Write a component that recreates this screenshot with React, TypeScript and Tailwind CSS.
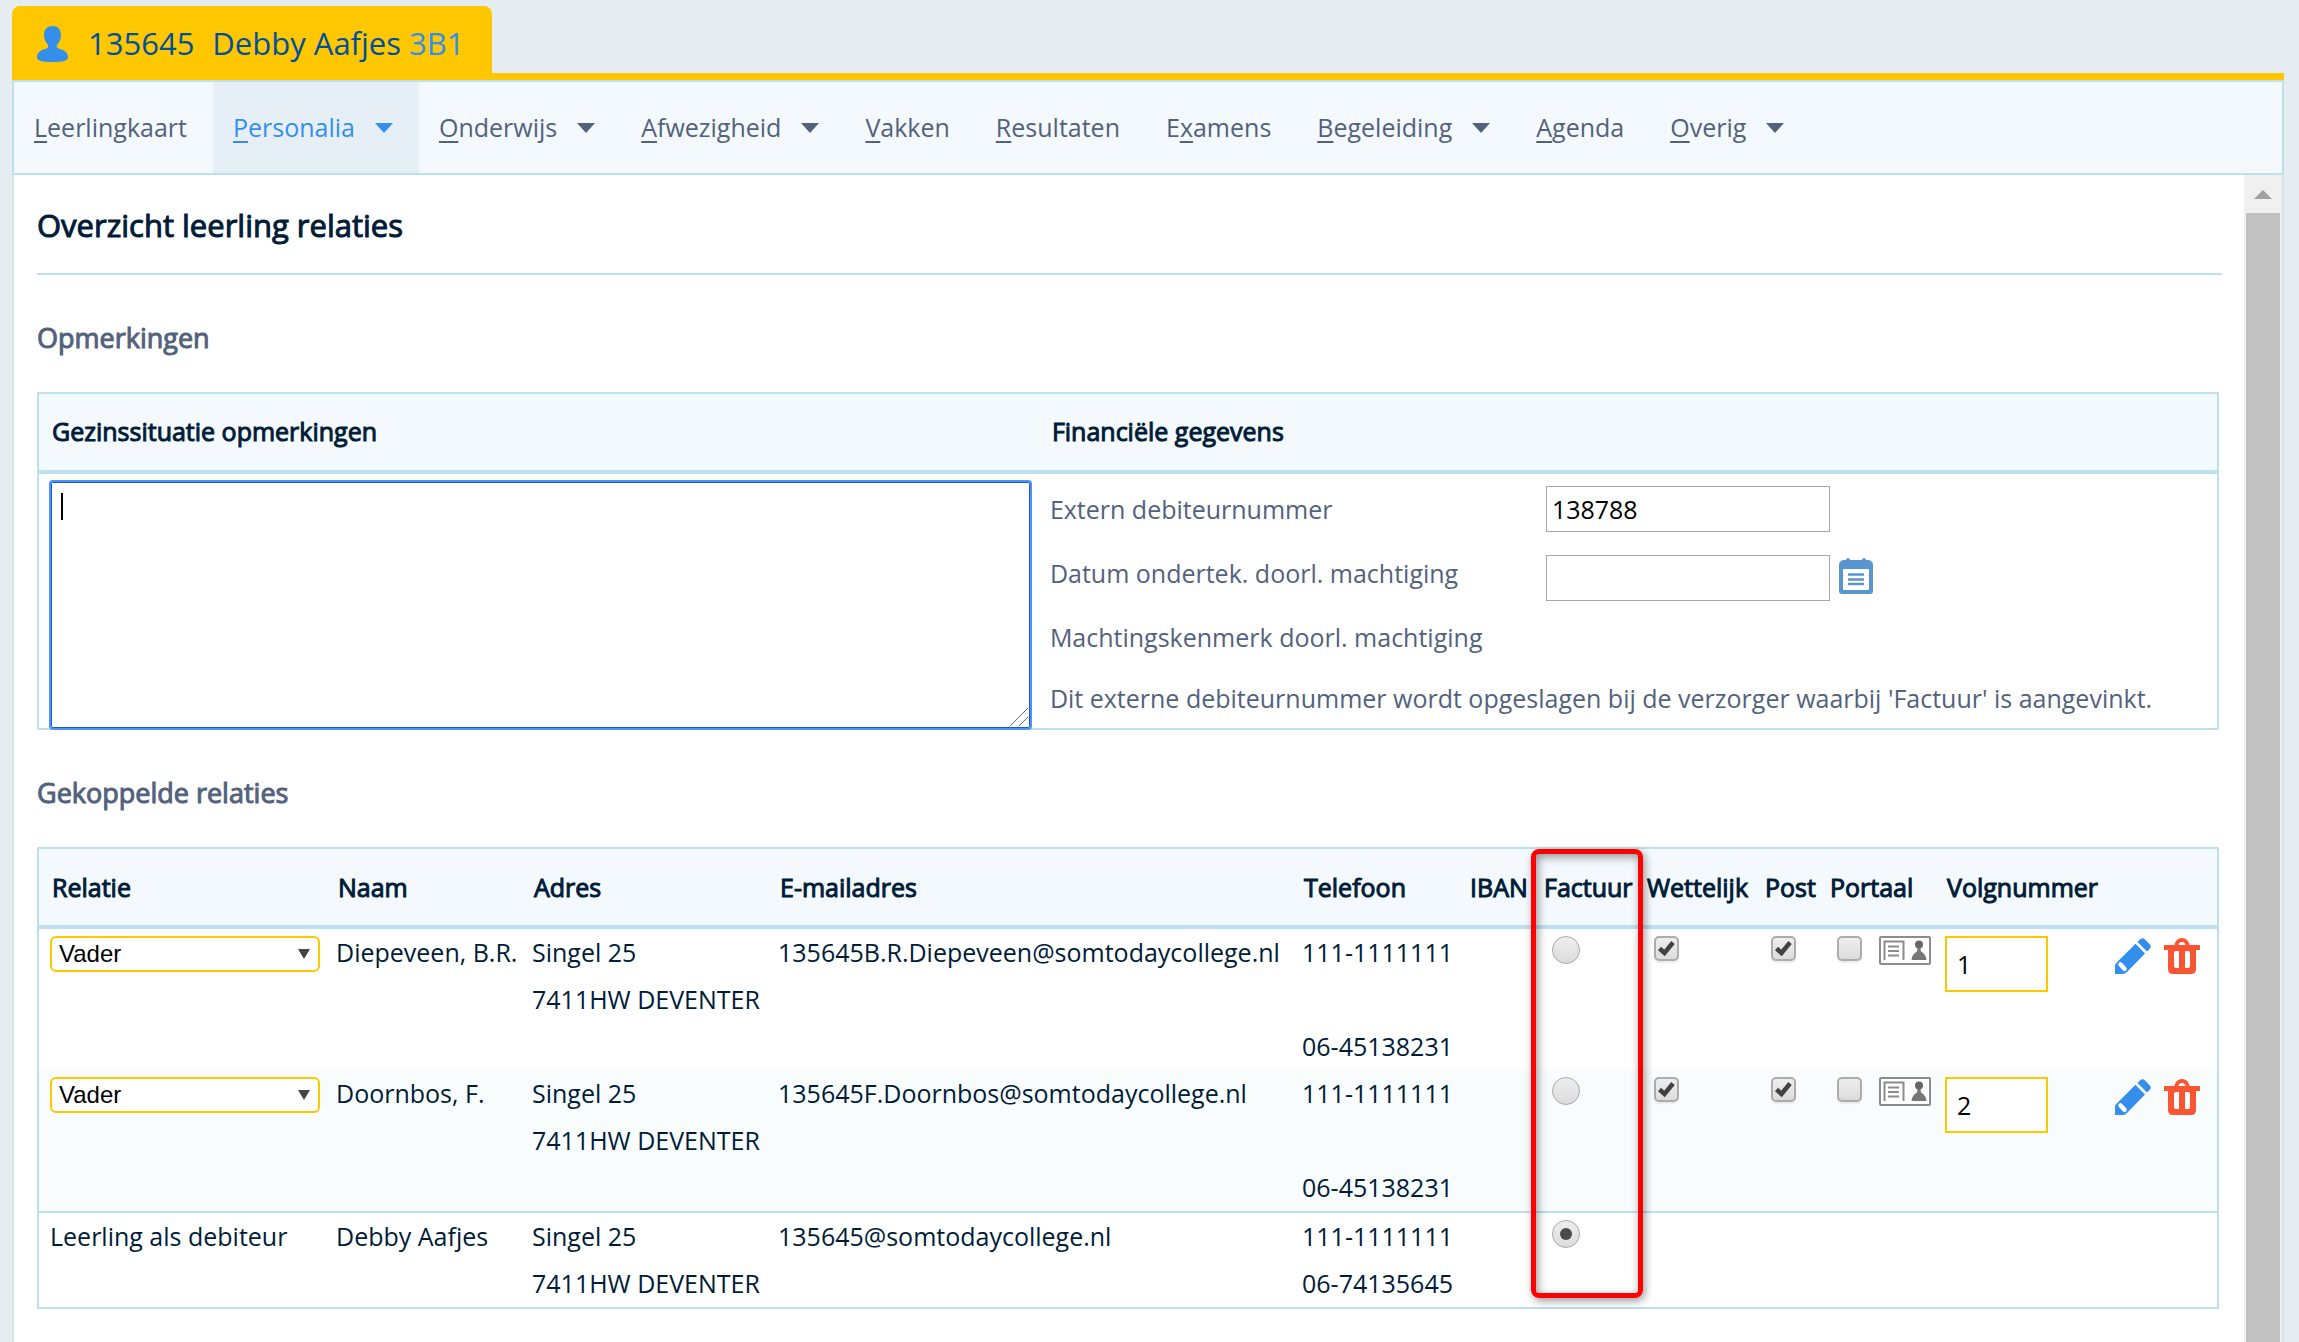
import React from "react";

const navItems = [
  { before: "", key: "L", after: "eerlingkaart" },
  { before: "", key: "P", after: "ersonalia", menu: true, active: true },
  { before: "", key: "O", after: "nderwijs", menu: true },
  { before: "", key: "A", after: "fwezigheid", menu: true },
  { before: "", key: "V", after: "akken" },
  { before: "", key: "R", after: "esultaten" },
  { before: "E", key: "x", after: "amens" },
  { before: "", key: "B", after: "egeleiding", menu: true },
  { before: "", key: "A", after: "genda" },
  { before: "", key: "O", after: "verig", menu: true },
];

const relations = [
  {
    id: "1",
    name: "Diepeveen, B.R.",
    email: "135645B.R.Diepeveen@somtodaycollege.nl",
    row: "bg-white",
  },
  {
    id: "2",
    name: "Doornbos, F.",
    email: "135645F.Doornbos@somtodaycollege.nl",
    row: "bg-[#f8fcfd]",
  },
];

function PersonIcon() {
  return (
    <svg viewBox="0 0 31 36" className="h-9 w-[31px] shrink-0" fill="#348fec" aria-hidden="true">
      <path d="M15.500 0C20.500 0 24 3 24 9C24 13.500 22 16.500 20 19C19.300 21.500 20 22 23 23C28 24.500 31 27 31 31C31 35 26 36 15.500 36C5 36 0 35 0 31C0 27 3 24.500 8 23C11 22 11.700 21.500 11 19C9 16.500 7 13.500 7 9C7 3 10.500 0 15.500 0Z" />
    </svg>
  );
}

function CalendarIcon() {
  return (
    <svg viewBox="0 0 34 36" className="h-9 w-[34px]" aria-hidden="true">
      <path
        fill="#5896d2"
        fillRule="evenodd"
        d="M7 2Q7 0 9 0T11 2H23Q23 0 25 0T27 2H30Q34 3 34 7V33Q34 36 31 36H3Q0 36 0 33V7Q0 3 4 2ZM5 11Q4 11 4 12V31Q4 32 5 32H29Q30 32 30 31V12Q30 11 29 11Z"
      />
      <path stroke="#5896d2" strokeWidth="2.400" d="M9 16.500H25M9 21.500H25M9 26H25" />
    </svg>
  );
}

function PencilIcon() {
  return (
    <svg viewBox="0 0 36 36" className="size-9" fill="#348fec" aria-hidden="true">
      <path d="M22.500 4L25 1.500Q27.500 -0.800 30 1.500L34.500 6Q37 8.500 34.500 11L32 13.500Z" />
      <path d="M20.500 5.800L30 15.500L12 34Q10 36 8 36H0V28Q0 26 2 24.300Z" />
      <path d="M5.500 26.500L9.500 30.800" stroke="#fff" strokeWidth="4.500" strokeLinecap="round" />
    </svg>
  );
}

function TrashIcon() {
  return (
    <svg viewBox="0 0 36 36" className="size-9" fill="#fa5532" aria-hidden="true">
      <path
        fillRule="evenodd"
        d="M0 7H10.500C11 3 14 0 18 0S25 3 25.500 7H36V12H32V31Q32 36 27 36H9Q4 36 4 31V12H0ZM14.500 7H21.500Q21 4 18 4T14.500 7ZM12 13Q10 13 10 15V28Q10 30 12 30H15V13ZM21 13V30H24Q26 30 26 28V15Q26 13 24 13Z"
      />
    </svg>
  );
}

function CardIcon() {
  return (
    <svg viewBox="0 0 52 29" className="h-[29px] w-[52px]" aria-hidden="true">
      <rect x="1" y="1" width="50" height="27" rx="1" fill="#fff" stroke="#8c8c8c" strokeWidth="2" />
      <path d="M5.500 24V5.500H24.500V24" fill="none" stroke="#8c8c8c" strokeWidth="2" />
      <path d="M9 10.500H20M9 15H20M9 19.500H20" stroke="#8c8c8c" strokeWidth="2" />
      <circle cx="40" cy="8.500" r="4" fill="#666" />
      <path d="M38.500 12H41.500L42 15.500Q47 18 47.500 24H32.500Q33 18 38 15.500Z" fill="#777" />
    </svg>
  );
}

function Tick({ label, checked = false }: { label: string; checked?: boolean }) {
  return (
    <span className="grid size-[25px]">
      <input
        type="checkbox"
        aria-label={label}
        defaultChecked={checked}
        className="peer col-start-1 row-start-1 size-[25px] appearance-none rounded-[5px] border-2 border-[#acacac] bg-linear-to-b from-[#eeeeee] to-[#dcdcdc] shadow-[0_2px_1px_#ebebeb]"
      />
      <svg
        viewBox="0 0 25 25"
        className="pointer-events-none invisible col-start-1 row-start-1 size-[25px] peer-checked:visible"
        aria-hidden="true"
      >
        <path d="M5.500 12.500L10.500 17L19 6.500" fill="none" stroke="#424242" strokeWidth="4.500" />
      </svg>
    </span>
  );
}

function InvoiceRadio({ label, checked = false }: { label: string; checked?: boolean }) {
  return (
    <span className="ml-[10px] grid size-7 place-items-center">
      <input
        type="radio"
        name="factuur"
        aria-label={label}
        defaultChecked={checked}
        className="peer col-start-1 row-start-1 size-7 appearance-none rounded-full border border-[#a8a8a8] bg-linear-to-b from-[#eeeeee] to-[#dcdcdc]"
      />
      <span className="pointer-events-none invisible col-start-1 row-start-1 size-3 rounded-full bg-[#4a4a4a] peer-checked:visible" />
    </span>
  );
}

function Address() {
  return (
    <>
      Singel 25
      <br />
      7411HW DEVENTER
    </>
  );
}

const headCell =
  "h-20 border-b-4 border-[#bde0ed] bg-[#f4f9fd] text-left align-middle font-normal [-webkit-text-stroke:1px]";
const th = headCell + " pl-[13px]";
const td = "pl-[11px]";
const control = "pt-[7px] pl-[11px]";
const sectionTitle =
  "pt-[9px] text-[27px] leading-[108px] font-normal text-[#53627c] [-webkit-text-stroke:1px]";
const textBox = "h-[46px] w-[284px] border border-[#a6a6a6] bg-white px-[5px] text-black";

export default function App() {
  return (
    <div className="flex min-h-screen flex-col bg-[#e5edf0] pt-[6px] pr-[15px] pl-3 font-['Open_Sans',sans-serif] text-[25px] text-[#001c37]">
      <header className="border-b-[7px] border-[#ffc700]">
        <div className="flex h-[67px] w-fit items-center rounded-t-lg bg-[#ffc700] pt-2 pr-[27px] pl-[25px] text-[31px] text-[#004f9e]">
          <PersonIcon />
          <span className="ml-5">135645</span>
          <span className="ml-[18px]">Debby Aafjes</span>
          <span className="ml-2 text-[#348fec]">3B1</span>
        </div>
      </header>

      <nav className="flex h-[95px] border-2 border-[#bde0ed] bg-[#f4f9fd] text-[#53627c]">
        {navItems.map((item) => (
          <a
            key={item.key + item.after}
            href="#"
            className={
              item.active
                ? "flex items-center bg-[#e7eff6] pr-[26px] pl-5 text-[#348fec]"
                : "flex items-center pr-[26px] pl-5"
            }
          >
            <span>
              {item.before}
              <span className="underline decoration-2 underline-offset-4">{item.key}</span>
              {item.after}
            </span>
            {item.menu && (
              <svg viewBox="0 0 18 10" className="ml-5 h-[10px] w-[18px]" fill="currentColor" aria-hidden="true">
                <path d="M0 0H18L9 10Z" />
              </svg>
            )}
          </a>
        ))}
      </nav>

      <div className="flex grow border-x-2 border-[#d5e6ea] bg-white">
        <main className="grow pr-[22px] pl-[23px]">
          <h1 className="border-b-2 border-[#bde0ed] pt-[2px] text-[31px] leading-[96px] font-normal [-webkit-text-stroke:1px]">
            Overzicht leerling relaties
          </h1>

          <h2 className={sectionTitle}>Opmerkingen</h2>
          <div className="mr-[3px] border-2 border-[#bde0ed]">
            <table className="w-full table-fixed border-separate border-spacing-0">
              <colgroup>
                <col className="w-[46%]" />
                <col />
              </colgroup>
              <thead>
                <tr>
                  <th className={th}>Gezinssituatie opmerkingen</th>
                  <th className={headCell + " pl-[11px]"}>Financiële gegevens</th>
                </tr>
              </thead>
              <tbody>
                <tr className="align-top">
                  <td className="pt-[6px] pr-[9px] pl-[10px]">
                    <div className="relative -mb-[2px]">
                      <textarea
                        aria-label="Gezinssituatie opmerkingen"
                        className="block h-[250px] w-full resize-none rounded border-2 border-[#4d90fe] px-2 py-1 shadow-[inset_0_0_0_1px_#1560bd] outline-none"
                      />
                      <span className="absolute top-[13px] left-3 h-[27px] w-[2px] bg-black" />
                      <svg
                        viewBox="0 0 18 18"
                        className="absolute right-[4px] bottom-[4px] size-[18px]"
                        stroke="#666"
                        aria-hidden="true"
                      >
                        <path d="M0 18L18 0M9 18L18 9" />
                      </svg>
                    </div>
                  </td>
                  <td className="pl-[9px] text-[#53627c]">
                    <div className="flex">
                      <div className="flex w-[496px] flex-col pt-[3px] leading-[64px]">
                        <label htmlFor="debiteur">Extern debiteurnummer</label>
                        <label htmlFor="datum">Datum ondertek. doorl. machtiging</label>
                        <span>Machtingskenmerk doorl. machtiging</span>
                      </div>
                      <div className="flex flex-col gap-[23px] pt-3">
                        <input id="debiteur" type="text" defaultValue="138788" className={textBox} />
                        <div className="flex items-start gap-[9px]">
                          <input id="datum" type="text" className={textBox} />
                          <button type="button" aria-label="Kies datum" className="pt-[3px]">
                            <CalendarIcon />
                          </button>
                        </div>
                      </div>
                    </div>
                    <p className="leading-[59px] whitespace-nowrap">
                      Dit externe debiteurnummer wordt opgeslagen bij de verzorger waarbij 'Factuur' is aangevinkt.
                    </p>
                  </td>
                </tr>
              </tbody>
            </table>
          </div>

          <h2 className={sectionTitle}>Gekoppelde relaties</h2>
          <div className="relative mr-[3px] border-2 border-[#bde0ed]">
            <table className="w-full table-fixed border-separate border-spacing-0 leading-[47px] whitespace-nowrap">
              <colgroup>
                <col className="w-[286px]" />
                <col className="w-[196px]" />
                <col className="w-[246px]" />
                <col />
                <col className="w-[166px]" />
                <col className="w-[74px]" />
                <col className="w-[103px]" />
                <col className="w-[118px]" />
                <col className="w-[65px]" />
                <col className="w-[117px]" />
                <col className="w-[170px]" />
                <col className="w-[113px]" />
              </colgroup>
              <thead>
                <tr>
                  <th className={th}>Relatie</th>
                  <th className={th}>Naam</th>
                  <th className={th}>Adres</th>
                  <th className={th}>E-mailadres</th>
                  <th className={th}>Telefoon</th>
                  <th className={th}>IBAN</th>
                  <th className={th}>Factuur</th>
                  <th className={th}>Wettelijk</th>
                  <th className={th}>Post</th>
                  <th className={th}>Portaal</th>
                  <th className={th}>Volgnummer</th>
                  <td className={th} />
                </tr>
              </thead>
              <tbody className="align-top">
                {relations.map((r) => (
                  <tr key={r.id} className={r.row}>
                    <td className={control}>
                      <div className="grid w-[270px] items-center">
                        <select
                          aria-label={"Relatie " + r.name}
                          className="col-start-1 row-start-1 h-9 appearance-none rounded-md border-2 border-[#ffc700] bg-white pl-[7px] font-['Liberation_Sans',sans-serif] text-[24px] leading-8 text-black"
                        >
                          <option>Vader</option>
                          <option>Moeder</option>
                        </select>
                        <svg
                          viewBox="0 0 12 10"
                          className="pointer-events-none col-start-1 row-start-1 mr-[10px] h-[10px] w-3 justify-self-end"
                          fill="#444"
                          aria-hidden="true"
                        >
                          <path d="M0 0H12L6 10Z" />
                        </svg>
                      </div>
                    </td>
                    <td className={td}>{r.name}</td>
                    <td className={td}>
                      <Address />
                    </td>
                    <td className={td}>{r.email}</td>
                    <td className={td}>
                      111-1111111
                      <br />
                      <br />
                      06-45138231
                    </td>
                    <td className={td} />
                    <td className={control}>
                      <InvoiceRadio label={"Factuur " + r.name} />
                    </td>
                    <td className={control}>
                      <div className="pl-[9px]">
                        <Tick label={"Wettelijk " + r.name} checked />
                      </div>
                    </td>
                    <td className={control}>
                      <div className="pl-2">
                        <Tick label={"Post " + r.name} checked />
                      </div>
                    </td>
                    <td className={control}>
                      <div className="flex gap-[17px] pl-[9px]">
                        <Tick label={"Portaal " + r.name} />
                        <CardIcon />
                      </div>
                    </td>
                    <td className={control}>
                      <input
                        type="text"
                        aria-label={"Volgnummer " + r.name}
                        defaultValue={r.id}
                        className="block h-14 w-[103px] border-2 border-[#ffc700] bg-white px-[10px] text-black"
                      />
                    </td>
                    <td className="pt-[9px] pl-[11px]">
                      <div className="flex gap-[13px]">
                        <button type="button" aria-label={"Bewerk " + r.name}>
                          <PencilIcon />
                        </button>
                        <button type="button" aria-label={"Verwijder " + r.name}>
                          <TrashIcon />
                        </button>
                      </div>
                    </td>
                  </tr>
                ))}
              </tbody>
              <tbody className="align-top [&_td]:border-t-2 [&_td]:border-[#bde0ed]">
                <tr>
                  <td className={td}>Leerling als debiteur</td>
                  <td className={td}>Debby Aafjes</td>
                  <td className={td}>
                    <Address />
                  </td>
                  <td className={td}>135645@somtodaycollege.nl</td>
                  <td className={td}>
                    111-1111111
                    <br />
                    06-74135645
                  </td>
                  <td className={td} />
                  <td className={control}>
                    <InvoiceRadio label="Factuur Debby Aafjes" checked />
                  </td>
                  <td colSpan={5} />
                </tr>
              </tbody>
            </table>
            <div className="pointer-events-none absolute top-0 right-[574px] bottom-[9px] w-[112px] rounded-lg border-[5px] border-[#fe0000] shadow-[2px_3px_8px_rgba(0,0,0,0.4),inset_2px_3px_10px_rgba(0,0,0,0.4)]" />
          </div>
        </main>

        <div className="flex w-[38px] shrink-0 flex-col items-center bg-[#f0f0f0]" aria-hidden="true">
          <div className="flex h-[38px] items-center">
            <svg viewBox="0 0 18 9" className="h-[9px] w-[18px]" fill="#a1a1a1">
              <path d="M0 9H18L9 0Z" />
            </svg>
          </div>
          <div className="w-[34px] grow bg-[#c1c1c1]" />
        </div>
      </div>
    </div>
  );
}
